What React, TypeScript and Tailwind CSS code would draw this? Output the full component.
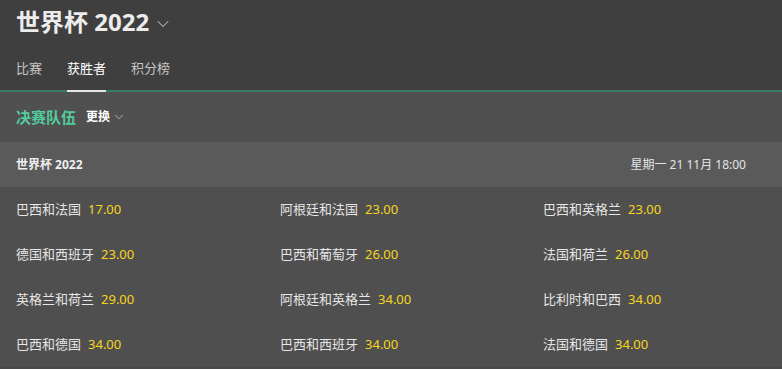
import { ChevronDown } from "lucide-react";

const odds: Array<[string, string]> = [
  ["巴西和法国", "17.00"],
  ["阿根廷和法国", "23.00"],
  ["巴西和英格兰", "23.00"],
  ["德国和西班牙", "23.00"],
  ["巴西和葡萄牙", "26.00"],
  ["法国和荷兰", "26.00"],
  ["英格兰和荷兰", "29.00"],
  ["阿根廷和英格兰", "34.00"],
  ["比利时和巴西", "34.00"],
  ["巴西和德国", "34.00"],
  ["巴西和西班牙", "34.00"],
  ["法国和德国", "34.00"],
];

const tabs = ["比赛", "获胜者", "积分榜"];

export default function App() {
  return (
    <div
      className="w-[782px] h-[369px] overflow-hidden bg-[#4f4f4f] text-white"
      style={{ fontFamily: '"Noto Sans", "Noto Sans CJK SC", sans-serif' }}
    >
      {/* Header */}
      <div className="bg-[#3f3f3f]">
        <div className="h-[44px] flex items-center pl-4 gap-[4px]">
          <h1 className="text-[24px] font-bold text-[#ececec] leading-none">世界杯 2022</h1>
          <ChevronDown size={20} strokeWidth={1.25} className="text-[#b5b5b5] mt-[3px]" />
        </div>
        <div className="h-[46px] flex items-stretch pl-4 gap-[25px] pt-[4px]">
          {tabs.map((t, i) => (
            <div
              key={t}
              className={`relative flex items-center text-[13px] ${
                i === 1 ? "text-white" : "text-[#c6c6c6]"
              }`}
            >
              {t}
              {i === 1 && <span className="absolute left-0 right-0 bottom-[-2px] h-[2px] bg-[#e6e6e6]" />}
            </div>
          ))}
        </div>
      </div>
      <div className="h-[2px] bg-[#3b7d63]" />

      {/* 决赛队伍 */}
      <div className="h-[50px] bg-[#505050] flex items-center pl-4 gap-[10px]">
        <span className="text-[15px] font-bold text-[#52cc9c]">决赛队伍</span>
        <span className="flex items-center gap-[2px] text-[12px] font-bold text-white">
          更换
          <ChevronDown size={14} strokeWidth={1.5} className="text-[#bdbdbd]" />
        </span>
      </div>

      {/* Event header */}
      <div className="h-[45px] bg-[#5a5a5a] flex items-center justify-between pl-4 pr-[36px]">
        <span className="text-[12px] font-bold text-[#f0f0f0]">世界杯 2022</span>
        <span className="text-[12px] text-[#e4e4e4]">星期一 21 11月 18:00</span>
      </div>

      {/* Odds grid */}
      <div className="grid grid-cols-[264px_263px_1fr] pl-4 bg-[#4f4f4f]">
        {odds.map(([name, price]) => (
          <div key={name} className="h-[45px] flex items-center gap-[7px] text-[13px]">
            <span className="text-[#e6e6e6]">{name}</span>
            <span className="text-[#f7d51d]">{price}</span>
          </div>
        ))}
      </div>
      <div className="h-[2px] bg-[#484848]" />
    </div>
  );
}
